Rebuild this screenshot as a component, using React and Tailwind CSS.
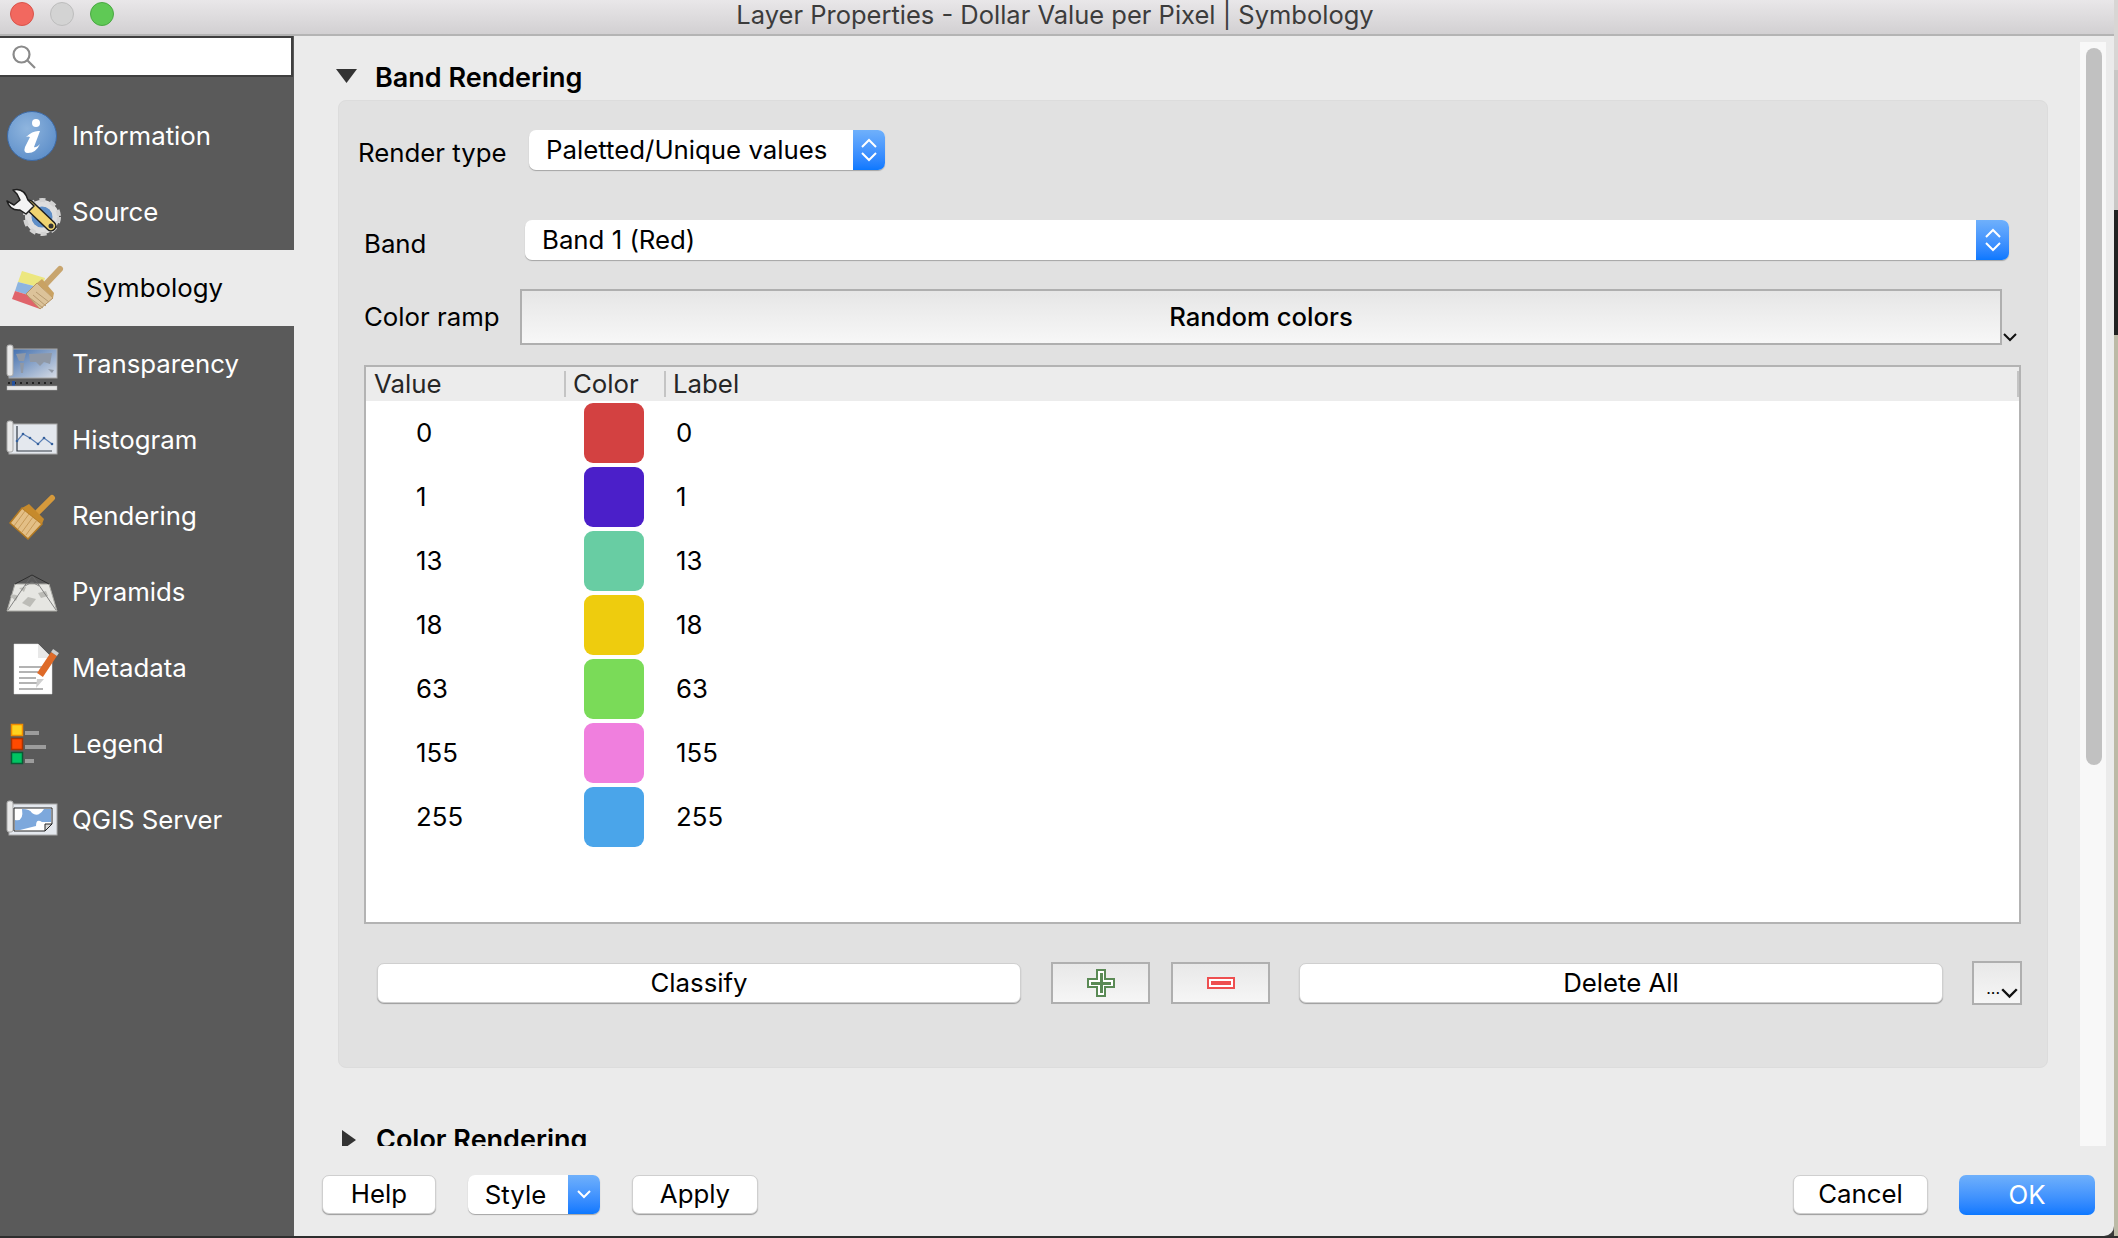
import React from 'react';

const rows = [
  { value: '0', color: 'bg-[#d34141]' },
  { value: '1', color: 'bg-[#4b1fc9]' },
  { value: '13', color: 'bg-[#68cda3]' },
  { value: '18', color: 'bg-[#eecc0e]' },
  { value: '63', color: 'bg-[#7adb58]' },
  { value: '155', color: 'bg-[#f07fde]' },
  { value: '255', color: 'bg-[#4aa5ea]' },
];

const IconSvg = ({ children }) => (
  <svg width="72" height="76" viewBox="0 0 72 76" className="shrink-0">
    {children}
  </svg>
);

const InfoIcon = () => (
  <IconSvg>
    <defs>
      <radialGradient id="infoBlue" cx="0.4" cy="0.35" r="0.75">
        <stop offset="0" stopColor="#8fb5de" />
        <stop offset="1" stopColor="#5a8cc8" />
      </radialGradient>
    </defs>
    <circle cx="32" cy="38" r="24.5" fill="url(#infoBlue)" stroke="#3d6aa6" strokeWidth="1" />
    <circle cx="36" cy="25" r="4" fill="#fff" />
    <path d="M26 39 Q33 32 40 33 L34 49 Q36 50 40 46 Q36 55 28 55 Q23 55 25 49 L30 39 Q28 38 26 39Z" fill="#fff" />
  </IconSvg>
);

const SourceIcon = () => (
  <IconSvg>
    <circle cx="42" cy="43" r="13.5" fill="none" stroke="#dedede" strokeWidth="7" />
    <circle cx="42" cy="43" r="17" fill="none" stroke="#d2d2d2" strokeWidth="4" strokeDasharray="6 5" />
    <circle cx="42" cy="43" r="10.5" fill="#5f8fc8" />
    <line x1="29" y1="31" x2="51" y2="52" stroke="#1e1e1e" strokeWidth="11" strokeLinecap="round" />
    <line x1="29" y1="31" x2="51" y2="52" stroke="#f0d470" strokeWidth="8" strokeLinecap="round" />
    <circle cx="51" cy="52" r="2.5" fill="#333" />
    <path d="M13 16 Q24 13 28 26 L34 32 L26 40 L20 36 Q10 37 7 27 L14 31 L20 26 L17 20Z" fill="#f4f4f4" stroke="#1e1e1e" strokeWidth="1.5" strokeLinejoin="round" />
  </IconSvg>
);

const SymbologyIcon = () => (
  <IconSvg>
    <polygon points="22,21 45,28 42,38 18,32" fill="#ece77f" />
    <polygon points="18,32 42,38 38,48 15,41" fill="#8db4e0" />
    <polygon points="15,41 38,48 40,59 12,49" fill="#e0646b" />
    <line x1="44" y1="36" x2="60" y2="19" stroke="#c8a56e" strokeWidth="6" strokeLinecap="round" />
    <polygon points="26,44 37,33 53,48 40,59" fill="#dcc39a" stroke="#b69260" strokeWidth="1" />
    <path d="M30 48 L43 58 M33 45 L46 56 M36 42 L49 52" stroke="#b69a70" strokeWidth="1" />
    <polygon points="37,33 42,29 54,43 53,48" fill="#c9a263" />
  </IconSvg>
);

const TransparencyIcon = () => (
  <IconSvg>
    <defs>
      <linearGradient id="mapFade" x1="0" y1="0" x2="1" y2="1">
        <stop offset="0" stopColor="#3c6bac" />
        <stop offset="1" stopColor="#d8dde6" />
      </linearGradient>
    </defs>
    <rect x="9" y="23" width="48" height="29" fill="url(#mapFade)" stroke="#a8a8a8" />
    <rect x="7" y="19" width="6" height="31" rx="2" fill="#e8e8e8" stroke="#a8a8a8" />
    <path d="M16 28 L26 27 L24 35 L19 35Z M20 37 L24 37 L23 47 L21 47Z M29 28 L52 27 L50 38 L44 36 L40 40 L36 36 L30 36Z M48 43 L54 44 L52 47Z" fill="#8f98a6" />
    <path d="M8 57 H56" stroke="#222" strokeWidth="2" strokeDasharray="2 4" />
    <rect x="12" y="55" width="3" height="6" fill="#24509c" />
    <rect x="7" y="60" width="50" height="4" fill="#e6e6e6" stroke="#b0b0b0" strokeWidth="0.5" />
  </IconSvg>
);

const HistogramIcon = () => (
  <IconSvg>
    <rect x="9" y="22" width="48" height="30" fill="#e4e8ee" stroke="#a8a8a8" />
    <rect x="7" y="19" width="6" height="31" rx="2" fill="#e8e8e8" stroke="#a8a8a8" />
    <path d="M17 24 V49 H52" fill="none" stroke="#333a45" strokeWidth="1.2" />
    <polyline points="17,39 23,32 30,36 38,42 44,36 52,42" fill="none" stroke="#5a7fb5" strokeWidth="1.2" />
    <g fill="#35609c">
      <circle cx="17" cy="39" r="1.3" />
      <circle cx="23" cy="32" r="1.3" />
      <circle cx="30" cy="36" r="1.3" />
      <circle cx="38" cy="42" r="1.3" />
      <circle cx="44" cy="36" r="1.3" />
      <circle cx="52" cy="42" r="1.3" />
    </g>
  </IconSvg>
);

const RenderingIcon = () => (
  <IconSvg>
    <line x1="36" y1="36" x2="52" y2="20" stroke="#d69a3c" strokeWidth="6" strokeLinecap="round" />
    <polygon points="10,45 22,30 42,46 28,61" fill="#e3bf86" stroke="#b47a22" strokeWidth="1.5" />
    <path d="M14 48 L25 33 M18 51 L29 36 M22 54 L33 39 M26 57 L37 42" stroke="#c79a58" strokeWidth="1" />
    <polygon points="22,30 29,26 44,41 42,46" fill="#c68a2c" />
  </IconSvg>
);

const PyramidsIcon = () => (
  <IconSvg>
    <polygon points="15,30 49,30 57,57 7,57" fill="#e6e6e2" stroke="#a9a9a4" />
    <path d="M10 42 Q14 39 18 42 L16 47Z M22 49 L28 43 L36 45 L30 53Z M38 39 L46 37 L48 42 L41 44Z M19 34 L26 33 L24 38Z" fill="#bcbcb7" />
    <path d="M32 21 L8 56 M32 21 L56 56" fill="none" stroke="#6a6a6a" strokeWidth="0.8" />
    <path d="M32 21 L15 30 M32 21 L49 30" fill="none" stroke="#2e2e2e" strokeWidth="1" />
    <path d="M25 32 L32 28 L39 32" fill="none" stroke="#777" strokeWidth="0.8" />
  </IconSvg>
);

const MetadataIcon = () => (
  <IconSvg>
    <path d="M14 14 H38 L52 28 V64 H14Z" fill="#fff" stroke="#ddd" strokeWidth="0.5" />
    <path d="M38 14 V28 H52" fill="#e8e8e8" />
    <path d="M19 37 H44 M19 42 H38 M19 48 H36 M19 53 H38 M19 59 H43" stroke="#9a9a9a" strokeWidth="1.5" />
    <line x1="40" y1="45" x2="54" y2="24" stroke="#de6a28" strokeWidth="7" />
    <line x1="54" y1="24" x2="56" y2="21" stroke="#cfcfcf" strokeWidth="7" />
    <polygon points="37,49 36,58 44,49" fill="#cfcfcf" />
  </IconSvg>
);

const LegendIcon = () => (
  <IconSvg>
    <rect x="11.5" y="18.5" width="11" height="11" fill="#ffd21e" stroke="#f08c00" strokeWidth="1.5" />
    <rect x="11.5" y="32.5" width="11" height="11" fill="#ff4a00" stroke="#a83200" strokeWidth="1.5" />
    <rect x="11.5" y="46.5" width="11" height="11" fill="#00c462" stroke="#0a5a34" strokeWidth="1.5" />
    <rect x="25" y="25" width="14" height="4" fill="#9c9c9c" />
    <rect x="25" y="39" width="21" height="4" fill="#9c9c9c" />
    <rect x="25" y="53" width="9" height="4" fill="#9c9c9c" />
  </IconSvg>
);

const ServerIcon = () => (
  <IconSvg>
    <rect x="9" y="22" width="48" height="31" fill="#e4e8ee" stroke="#a8a8a8" />
    <rect x="7" y="19" width="6" height="31" rx="2" fill="#e8e8e8" stroke="#a8a8a8" />
    <path d="M14 26 H52 V42 L45 49 H14Z" fill="#fff" stroke="#222" strokeWidth="1" />
    <path d="M22 27 Q30 27 32 31 Q38 36 44 27 H51 V40 L42 40 Q36 36 36 44 L20 48 H15 V38 Q24 40 22 27Z" fill="#7da8dc" />
    <path d="M52 42 L45 42 L45 49Z" fill="#d8d8d8" stroke="#222" strokeWidth="1" />
  </IconSvg>
);

const navItems = [
  { name: 'Information', Icon: InfoIcon },
  { name: 'Source', Icon: SourceIcon },
  { name: 'Symbology', Icon: SymbologyIcon, active: true },
  { name: 'Transparency', Icon: TransparencyIcon },
  { name: 'Histogram', Icon: HistogramIcon },
  { name: 'Rendering', Icon: RenderingIcon },
  { name: 'Pyramids', Icon: PyramidsIcon },
  { name: 'Metadata', Icon: MetadataIcon },
  { name: 'Legend', Icon: LegendIcon },
  { name: 'QGIS Server', Icon: ServerIcon },
];

const UpDown = () => (
  <svg width="16" height="26" viewBox="0 0 16 26" fill="none" stroke="#fff" strokeWidth="2">
    <path d="M1 10 L8 3 L15 10 M1 16 L8 23 L15 16" />
  </svg>
);

const Chevron = ({ className, color = '#111', width = 14, height = 9 }) => (
  <svg width={width} height={height} viewBox="0 0 14 9" fill="none" stroke={color} strokeWidth="2" className={className}>
    <path d="M1 1 L7 7 L13 1" />
  </svg>
);

const MacButton = ({ className, children }) => (
  <div
    className={
      'flex items-center justify-center bg-white rounded-[7px] border border-[#cfcfcf] shadow-[0_1px_1px_#9c9c9c] text-[25.8px] text-black ' +
      className
    }
  >
    {children}
  </div>
);

const ToolButton = ({ children }) => (
  <div className="w-[99px] h-[42px] flex items-center justify-center border-2 border-[#afafaf] bg-gradient-to-b from-[#e8e8e8] to-[#f6f6f6]">
    {children}
  </div>
);

export default function App() {
  return (
    <div className="w-[2118px] h-[1238px] overflow-hidden flex flex-col bg-[#3a3a3a] font-['Inter',sans-serif]">
      <div className="flex h-[1236px]">
        <div className="w-[2114px] flex flex-col bg-[#ebebeb] rounded-br-[10px] overflow-hidden">
          {/* title bar */}
          <div className="h-[36px] shrink-0 flex items-start pt-[2px] px-[10px] bg-gradient-to-b from-[#e9e7e9] to-[#d2d0d2] border-b-2 border-[#b4b4b4]">
            <div className="w-[24px] h-[24px] rounded-full bg-[#f2685f] border border-[#d9534a]" />
            <div className="w-[24px] h-[24px] rounded-full bg-[#d3d3d3] border border-[#bdbdbd] ml-[16px]" />
            <div className="w-[24px] h-[24px] rounded-full bg-[#5fc955] border border-[#4aa843] ml-[16px]" />
            <div className="flex-1 text-center text-[25.5px] leading-[26px] text-[#3c3c3c] pr-[108px]">
              Layer Properties - Dollar Value per Pixel | Symbology
            </div>
          </div>

          <div className="flex flex-1 min-h-0">
            {/* sidebar */}
            <div className="w-[294px] shrink-0 bg-[#5a5a5a] flex flex-col">
              <div className="h-[41px] mr-[1px] bg-white border-t-2 border-b-2 border-r-2 border-[#3f3f3f] flex items-center pl-[11px]">
                <svg width="26" height="26" viewBox="0 0 26 26" fill="none" stroke="#8a8a8a" strokeWidth="2.2">
                  <circle cx="10.5" cy="10.5" r="8" />
                  <path d="M16 16 L24 24" />
                </svg>
              </div>
              <div className="mt-[21px]">
                {navItems.map(({ name, Icon, active }) => (
                  <div
                    key={name}
                    className={
                      'h-[76px] flex items-center text-[25.8px] ' +
                      (active ? 'bg-[#ebebeb] text-black' : 'text-white')
                    }
                  >
                    <Icon />
                    <span className={active ? 'pl-[14px]' : ''}>{name}</span>
                  </div>
                ))}
              </div>
            </div>

            {/* main */}
            <div className="flex-1 min-w-0 flex flex-col">
              <div className="h-[1110px] shrink-0 flex">
                <div className="flex-1 min-w-0 overflow-hidden pl-[44px]">
                  <div className="h-[64px] flex items-center pt-[20px]">
                    <svg width="22" height="14" viewBox="0 0 22 14" className="-ml-[2px] -mt-[4px]">
                      <polygon points="0,0 21,0 10.5,14" fill="#333" />
                    </svg>
                    <span className="ml-[17px] text-[27px] font-semibold text-black">Band Rendering</span>
                  </div>

                  <div className="w-[1710px] h-[968px] bg-[#e1e1e1] border border-[#dcdcdc] rounded-[8px]">
                    <div className="flex mt-[29px] pl-[19px]">
                      <div className="w-[171px] pt-[6px] text-[25.8px] leading-[34px] text-black">Render type</div>
                      <div className="w-[356px] h-[40px] flex rounded-[7px] bg-white shadow-[0_1px_1px_#a5a5a5] overflow-hidden">
                        <div className="flex-1 pl-[17px] text-[25.8px] leading-[40px] text-black">Paletted/Unique values</div>
                        <div className="w-[32px] flex items-center justify-center bg-gradient-to-b from-[#6fb0fb] to-[#0a78ff]">
                          <UpDown />
                        </div>
                      </div>
                    </div>

                    <div className="flex mt-[50px] pl-[25px]">
                      <div className="w-[161px] pt-[7px] text-[25.8px] leading-[34px] text-black">Band</div>
                      <div className="w-[1484px] h-[40px] flex rounded-[7px] bg-white shadow-[0_1px_1px_#a5a5a5] overflow-hidden">
                        <div className="flex-1 pl-[17px] text-[25.8px] leading-[40px] text-black">Band 1 (Red)</div>
                        <div className="w-[33px] flex items-center justify-center bg-gradient-to-b from-[#6fb0fb] to-[#0a78ff]">
                          <UpDown />
                        </div>
                      </div>
                    </div>

                    <div className="flex mt-[28px] pl-[25px]">
                      <div className="w-[156px] flex items-center text-[25.8px] text-black">Color ramp</div>
                      <div className="w-[1482px] h-[56px] flex items-center justify-center border-2 border-[#afafaf] bg-gradient-to-b from-[#e6e6e6] to-[#f7f7f7] text-[25.7px] font-medium text-black">
                        Random colors
                      </div>
                      <Chevron className="self-end ml-[1px] mb-[3px]" />
                    </div>

                    <div className="ml-[25px] mt-[20px] w-[1657px] h-[559px] border-2 border-[#b3b3b3] bg-white">
                      <div className="h-[34px] bg-[#ececec] flex items-center text-[25.8px] leading-[32px] text-[#262626]">
                        <div className="w-[198px] pl-[8px]">Value</div>
                        <div className="w-[2px] h-[26px] bg-[#c4c4c4]" />
                        <div className="w-[98px] pl-[7px]">Color</div>
                        <div className="w-[2px] h-[26px] bg-[#c4c4c4]" />
                        <div className="flex-1 pl-[7px]">Label</div>
                        <div className="w-[2px] h-[26px] bg-[#c4c4c4]" />
                      </div>
                      {rows.map((r) => (
                        <div key={r.value} className="h-[64px] flex items-center text-[25.8px] text-black">
                          <div className="w-[218px] pl-[50px]">{r.value}</div>
                          <div className={'w-[60px] h-[60px] rounded-[9px] ' + r.color} />
                          <div className="pl-[32px]">{r.value}</div>
                        </div>
                      ))}
                    </div>

                    <div className="flex items-center ml-[38px] mt-[37px]">
                      <MacButton className="w-[644px] h-[40px]">Classify</MacButton>
                      <div className="ml-[30px]">
                        <ToolButton>
                          <svg width="28" height="28" viewBox="0 0 28 28" shapeRendering="crispEdges">
                            <path d="M9 0 H19 V9 H28 V19 H19 V28 H9 V19 H0 V9 H9Z" fill="#5a8a55" />
                            <path d="M11 2 H17 V11 H26 V17 H17 V26 H11 V17 H2 V11 H11Z" fill="#fff" />
                            <path d="M12.5 4 H15.5 V12.5 H24 V15.5 H15.5 V24 H12.5 V15.5 H4 V12.5 H12.5Z" fill="#5a8a55" />
                          </svg>
                        </ToolButton>
                      </div>
                      <div className="ml-[21px]">
                        <ToolButton>
                          <svg width="28" height="12" viewBox="0 0 28 12" shapeRendering="crispEdges">
                            <rect width="28" height="12" fill="#ee4f50" />
                            <rect x="2" y="2" width="24" height="8" fill="#fff" />
                            <rect x="4" y="4" width="20" height="4" fill="#ee4f50" />
                          </svg>
                        </ToolButton>
                      </div>
                      <MacButton className="w-[644px] h-[40px] ml-[29px]">Delete All</MacButton>
                      <div className="w-[50px] h-[44px] ml-[29px] flex items-end justify-end pb-[3px] pr-[2px] border-2 border-[#afafaf] bg-gradient-to-b from-[#e8e8e8] to-[#f6f6f6]">
                        <span className="text-[16px] leading-[16px] text-black mr-[1px] mb-[4px]">...</span>
                        <Chevron width={17} height={11} className="mb-[1px]" />
                      </div>
                    </div>
                  </div>

                  <div className="h-[36px] flex items-center mt-[54px]">
                    <svg width="14" height="20" viewBox="0 0 14 20" className="ml-[4px]">
                      <polygon points="0,0 14,10 0,20" fill="#333" />
                    </svg>
                    <span className="ml-[20px] text-[27px] font-semibold text-black">Color Rendering</span>
                  </div>
                </div>

                {/* scrollbar */}
                <div className="w-[26px] mt-[6px] mr-[8px] bg-[#f8f8f8] pl-[6px] pt-[6px]">
                  <div className="w-[16px] h-[717px] rounded-full bg-[#c1c1c1]" />
                </div>
              </div>

              {/* bottom buttons */}
              <div className="flex pl-[28px] pr-[19px] pt-[29px]">
                <MacButton className="w-[114px] h-[39px]">Help</MacButton>
                <div className="w-[132px] h-[39px] ml-[32px] flex rounded-[7px] bg-white shadow-[0_1px_1px_#a5a5a5] overflow-hidden">
                  <div className="flex-1 pr-[5px] text-center text-[25.8px] leading-[39px] text-black">Style</div>
                  <div className="w-[32px] flex items-center justify-center bg-gradient-to-b from-[#6fb0fb] to-[#0a78ff]">
                    <Chevron color="#fff" />
                  </div>
                </div>
                <MacButton className="w-[126px] h-[39px] ml-[32px]">Apply</MacButton>
                <MacButton className="w-[135px] h-[39px] ml-auto">Cancel</MacButton>
                <div className="w-[136px] h-[40px] ml-[31px] flex items-center justify-center rounded-[7px] bg-gradient-to-b from-[#6fb0fb] to-[#0a78ff] text-[25.8px] text-white">
                  OK
                </div>
              </div>
            </div>
          </div>
        </div>

        {/* desktop behind the window */}
        <div className="w-[4px] flex flex-col">
          <div className="h-[70px] bg-[#d8d6d4]" />
          <div className="h-[140px] bg-[#c9c7c5]" />
          <div className="h-[125px] bg-[#222222]" />
          <div className="flex-1 bg-[#bcbaa6]" />
        </div>
      </div>
      <div className="h-[2px] bg-[#2e2e2e]" />
    </div>
  );
}
